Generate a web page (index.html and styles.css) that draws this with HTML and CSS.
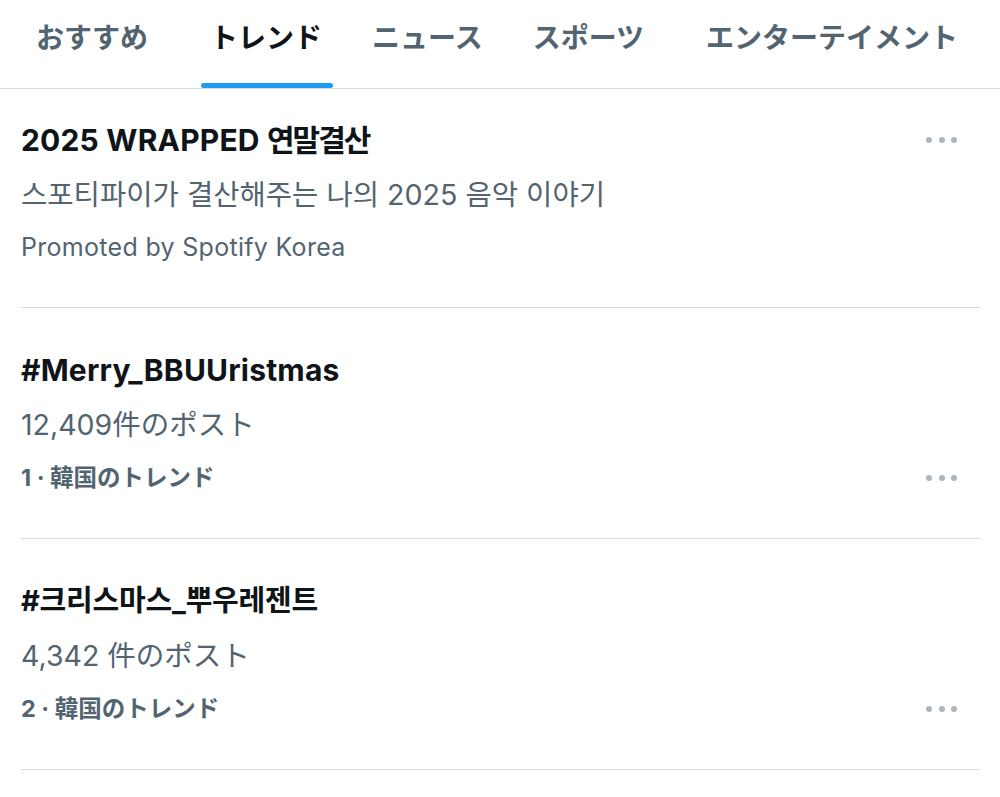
FILE: index.html
```html
<!DOCTYPE html>
<html lang="ja">
<head>
<meta charset="utf-8">
<title>トレンド</title>
<link rel="stylesheet" href="styles.css">
</head>
<body>
<nav class="tabs">
  <div class="tab tab-spaced">おすすめ</div>
  <div class="tab tab-active">トレンド</div>
  <div class="tab">ニュース</div>
  <div class="tab tab-spaced">スポーツ</div>
  <div class="tab">エンターテイメント</div>
</nav>
<main class="list">
  <section class="row row-first">
    <div class="content">
      <div class="title">2025 WRAPPED <span class="ko" lang="ko">연말결산</span></div>
      <div class="sub sub-ko" lang="ko">스포티파이가 결산해주는 나의 2025 음악 이야기</div>
      <div class="promo">Promoted by Spotify Korea</div>
    </div>
    <div class="more more-top"><span></span><span></span><span></span></div>
  </section>
  <section class="row">
    <div class="content">
      <div class="title">#Merry_BBUUristmas</div>
      <div class="sub">12,409件のポスト</div>
      <div class="meta">1 · 韓国のトレンド</div>
    </div>
    <div class="more more-bottom"><span></span><span></span><span></span></div>
  </section>
  <section class="row">
    <div class="content">
      <div class="title title-ko" lang="ko">#크리스마스_뿌우레젠트</div>
      <div class="sub">4,342 件のポスト</div>
      <div class="meta">2 · 韓国のトレンド</div>
    </div>
    <div class="more more-bottom"><span></span><span></span><span></span></div>
  </section>
</main>
</body>
</html>
```

FILE: styles.css
```css
* {
  box-sizing: border-box;
}

html, body {
  margin: 0;
  padding: 0;
  background: #ffffff;
}

body {
  font-family: Inter, "Noto Sans CJK JP", "Noto Sans CJK KR", sans-serif;
  color: #0f1419;
}

[lang="ko"] {
  font-family: Inter, "Noto Sans CJK KR", sans-serif;
}

.tabs {
  display: flex;
  gap: 28px;
  height: 89px;
  padding: 0 0 0 25px;
  border-bottom: 1px solid #d9dde0;
}

.tab {
  position: relative;
  padding: 0 11px;
  font-size: 28px;
  font-weight: 700;
  line-height: 76px;
  color: #536471;
  white-space: nowrap;
}

.tab-spaced {
  margin-right: 12px;
}

.tab-active {
  color: #0f1419;
}

.tab-active::after {
  content: "";
  position: absolute;
  left: 2px;
  right: 0;
  bottom: 0;
  height: 5px;
  border-radius: 3px;
  background: #1d9bf0;
}

.list {
  margin: 0 20px 0 21px;
}

.row {
  display: flex;
  justify-content: space-between;
  padding: 44px 0 45px 0;
  border-bottom: 1px solid #d9dde0;
}

.row-first {
  padding-top: 33px;
}

.title {
  font-size: 30px;
  font-weight: 700;
  line-height: 36px;
  height: 36px;
  color: #0f1419;
  letter-spacing: 0.2px;
}

.title .ko {
  letter-spacing: -2px;
}

.title-ko {
  font-size: 29px;
  letter-spacing: -0.2px;
}

.sub {
  margin-top: 19px;
  font-size: 28.5px;
  line-height: 36px;
  height: 36px;
  color: #536471;
}

.sub-ko {
  font-size: 28.6px;
}

.promo {
  margin-top: 19px;
  font-size: 25px;
  line-height: 30px;
  height: 30px;
  color: #536471;
  letter-spacing: 0.3px;
}

.meta {
  margin-top: 20px;
  font-size: 23.5px;
  font-weight: 700;
  line-height: 30px;
  height: 30px;
  color: #536471;
}

.more {
  display: flex;
  align-items: center;
  gap: 6.5px;
  margin-right: 23px;
}

.more span {
  width: 6px;
  height: 6px;
  border-radius: 50%;
  background: #aeb6bd;
}

.more-top {
  align-self: flex-start;
  height: 36px;
}

.more-bottom {
  align-self: flex-end;
  height: 30px;
}
```
